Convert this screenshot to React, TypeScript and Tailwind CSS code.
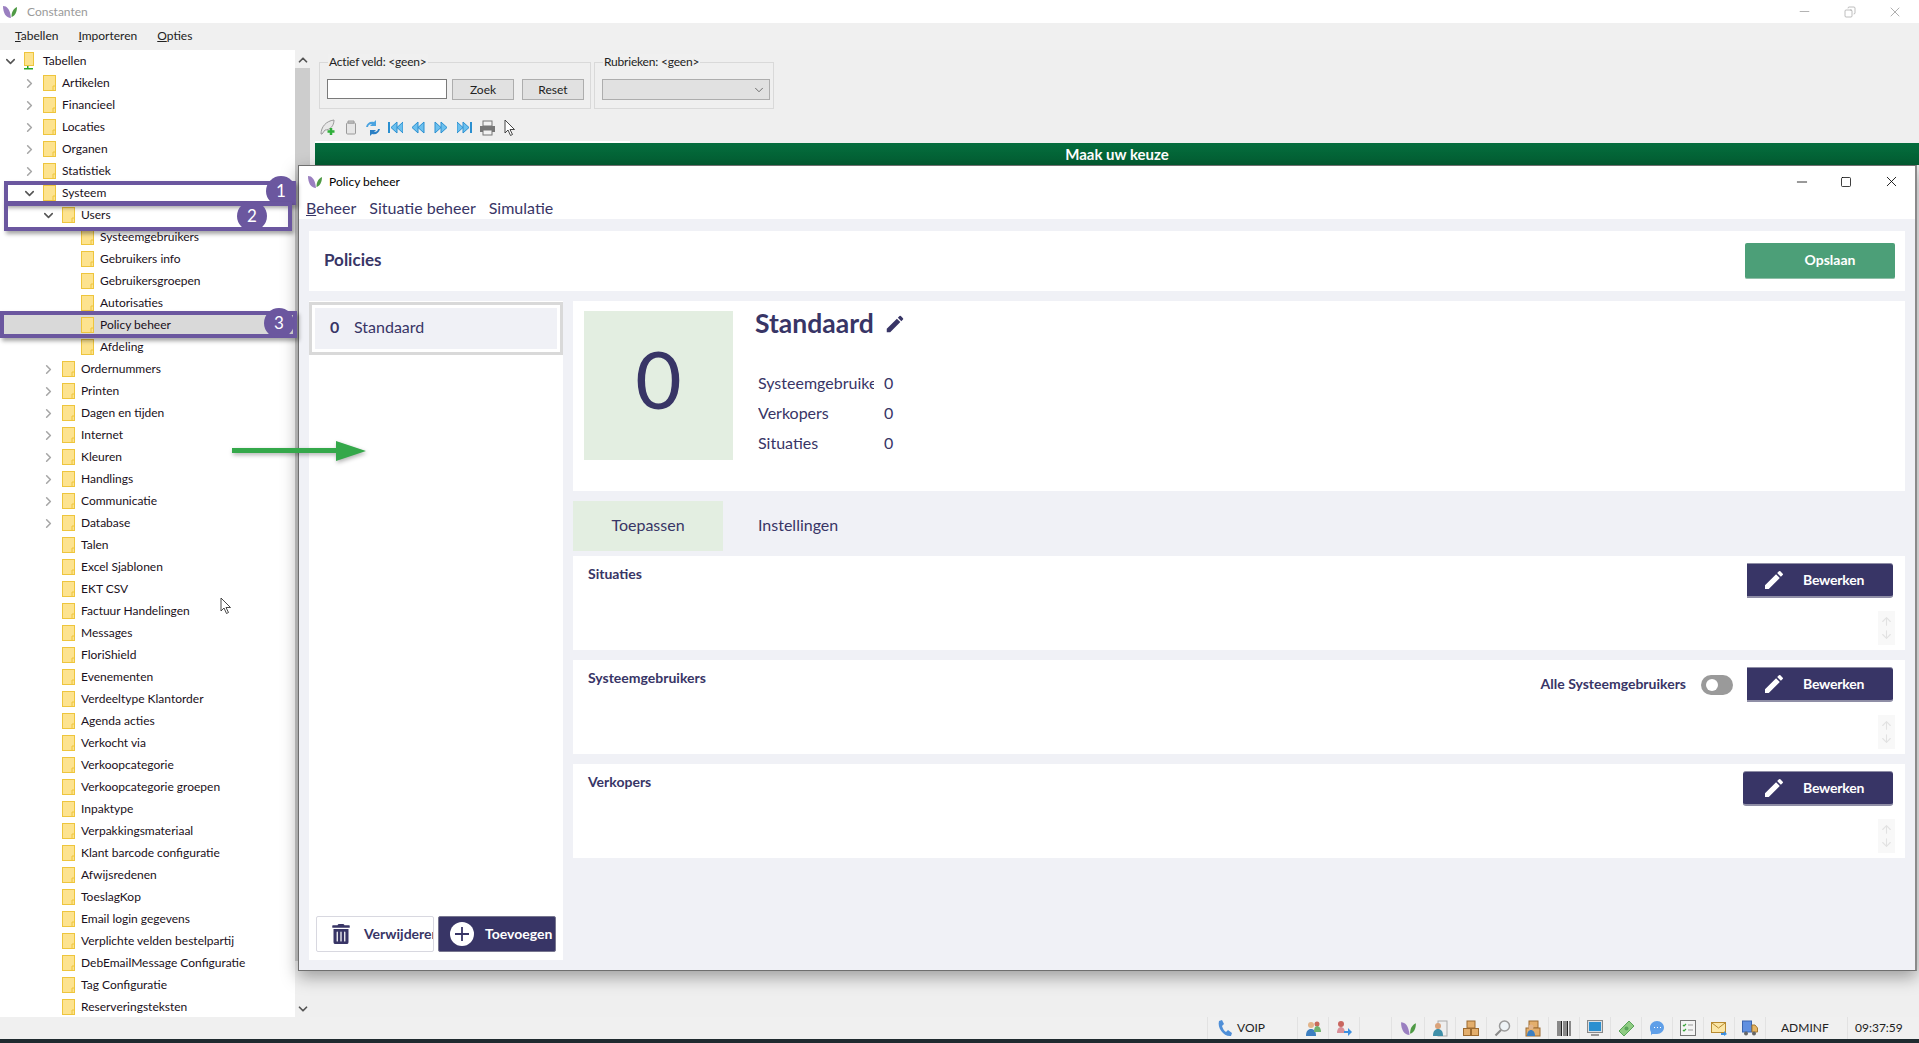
import React from 'react';
import { ChevronDown, ChevronRight, ChevronUp, ArrowUp, ArrowDown, Minus, Square, X, Copy } from 'lucide-react';
import { MdEdit } from 'react-icons/md';
import { FaTrashAlt } from 'react-icons/fa';

const FONT = "font-['Lato','Noto_Sans',sans-serif]";

type TreeItem = { label: string; depth: number; state?: 'open' | 'closed'; selected?: boolean };

const closed = (label: string, depth: number): TreeItem => ({ label, depth, state: 'closed' });
const leaf = (label: string, depth: number): TreeItem => ({ label, depth });

const TREE: TreeItem[] = [
  { label: 'Tabellen', depth: 0, state: 'open' },
  closed('Artikelen', 1),
  closed('Financieel', 1),
  closed('Locaties', 1),
  closed('Organen', 1),
  closed('Statistiek', 1),
  { label: 'Systeem', depth: 1, state: 'open' },
  { label: 'Users', depth: 2, state: 'open' },
  leaf('Systeemgebruikers', 3),
  leaf('Gebruikers info', 3),
  leaf('Gebruikersgroepen', 3),
  leaf('Autorisaties', 3),
  { label: 'Policy beheer', depth: 3, selected: true },
  leaf('Afdeling', 3),
  closed('Ordernummers', 2),
  closed('Printen', 2),
  closed('Dagen en tijden', 2),
  closed('Internet', 2),
  closed('Kleuren', 2),
  closed('Handlings', 2),
  closed('Communicatie', 2),
  closed('Database', 2),
  leaf('Talen', 2),
  leaf('Excel Sjablonen', 2),
  leaf('EKT CSV', 2),
  leaf('Factuur Handelingen', 2),
  leaf('Messages', 2),
  leaf('FloriShield', 2),
  leaf('Evenementen', 2),
  leaf('Verdeeltype Klantorder', 2),
  leaf('Agenda acties', 2),
  leaf('Verkocht via', 2),
  leaf('Verkoopcategorie', 2),
  leaf('Verkoopcategorie groepen', 2),
  leaf('Inpaktype', 2),
  leaf('Verpakkingsmateriaal', 2),
  leaf('Klant barcode configuratie', 2),
  leaf('Afwijsredenen', 2),
  leaf('ToeslagKop', 2),
  leaf('Email login gegevens', 2),
  leaf('Verplichte velden bestelpartij', 2),
  leaf('DebEmailMessage Configuratie', 2),
  leaf('Tag Configuratie', 2),
  leaf('Reserveringsteksten', 2),
];

const INDENT = ['pl-0', 'pl-[19px]', 'pl-[38px]', 'pl-[57px]'];

function Leaf({ size = 16 }: { size?: number }) {
  return (
    <svg width={size} height={size} viewBox="0 0 16 16">
      <path d="M1 2C5 2 8 5 9 14 4 14 1 9 1 2Z" fill="#9a7fc0" />
      <path d="M15 3C15 8 13 12 9.500 13 9.500 8 11 5 15 3Z" fill="#4f9a45" />
    </svg>
  );
}

function Folder() {
  return (
    <svg width="13" height="16" viewBox="0 0 13 16" className="shrink-0">
      <rect x="0.500" y="0.500" width="12" height="15" fill="#fde38f" stroke="#eec53d" />
      <path d="M10 15.500V11h2.500" fill="none" stroke="#eec53d" />
    </svg>
  );
}

function RootFolder() {
  return (
    <svg width="13" height="18" viewBox="0 0 13 18" className="shrink-0">
      <rect x="0.500" y="0.500" width="9" height="13" fill="#fde38f" stroke="#eec53d" />
      <rect x="3" y="14" width="1.500" height="3" fill="#2aa52a" />
      <rect x="0" y="16" width="9" height="1.500" fill="#2aa52a" />
    </svg>
  );
}

function TreeRow({ item }: { item: TreeItem }) {
  return (
    <div className={`h-[22px] flex items-center ${INDENT[item.depth]} ${item.selected ? 'bg-[#d9d9d9]' : ''}`}>
      <span className="w-[24px] shrink-0 flex justify-center pr-[4px]">
        {item.state === 'open' && <ChevronDown size={15} strokeWidth={2.5} className="text-[#555]" />}
        {item.state === 'closed' && <ChevronRight size={15} strokeWidth={2.5} className="text-[#a6a6a6]" />}
      </span>
      {item.depth === 0 ? <RootFolder /> : <Folder />}
      <span className="ml-[6px] text-[12px] text-[#1a1020] whitespace-nowrap">{item.label}</span>
    </div>
  );
}

function Underlined({ first, rest }: { first: string; rest: string }) {
  return (
    <span>
      <span className="underline">{first}</span>
      {rest}
    </span>
  );
}

function GroupBox({ legend, className, children }: { legend: string; className: string; children: React.ReactNode }) {
  return (
    <div className={`relative h-[47px] border border-[#d9d9d9] ${className}`}>
      <span className="absolute left-[8px] -top-[9px] bg-[#f0f0f0] px-px text-[12px] tracking-[-0.2px] leading-[16px] text-[#222]">{legend}</span>
      {children}
    </div>
  );
}

function SkipIcon({ dir, bar }: { dir: 'l' | 'r'; bar?: boolean }) {
  const d = dir === 'l' ? 'M7 1 1 6.500 7 12ZM13 1 7 6.500 13 12Z' : 'M1 1 7 6.500 1 12ZM7 1 13 6.500 7 12Z';
  return (
    <svg width="15" height="13" viewBox="0 0 15 13">
      <path d={d} fill="#6cc0ee" stroke="#2a8fd0" strokeWidth="1" transform={bar ? (dir === 'l' ? 'translate(2 0)' : 'translate(-1 0)') : undefined} />
      {bar && <rect x={dir === 'l' ? 0 : 13} y="1" width="2" height="11" fill="#2a8fd0" />}
    </svg>
  );
}

function Toolbar() {
  return (
    <div className="h-[32px] flex items-center pl-[9px] pt-[5px]">
      <svg width="17" height="17" viewBox="0 0 17 17">
        <path d="M2 15C2 8 7 2 15 1 15 7 11 11 6 11L3 15Z" fill="#e8e8e8" stroke="#9a9a9a" />
        <path d="M12 9v7M8.500 12.500h7" stroke="#2faf3a" strokeWidth="2.500" />
      </svg>
      <svg width="12" height="15" viewBox="0 0 12 15" className="ml-[9px]">
        <rect x="1.500" y="3" width="9" height="11" rx="1" fill="#e6e6e6" stroke="#9a9a9a" />
        <path d="M3 1h6v2H3Z" fill="#cfcfcf" stroke="#9a9a9a" />
      </svg>
      <svg width="16" height="16" viewBox="0 0 16 16" className="ml-[8px]">
        <path d="M1 7C2 3 5 1 9 2L11 0V6H5L7 4C5 4 3 5 3 7Z" fill="#4aa3e0" />
        <path d="M15 9C14 13 11 15 7 14L5 16V10H11L9 12C11 12 13 11 13 9Z" fill="#2a7fc4" />
      </svg>
      <span className="ml-[7px] flex"><SkipIcon dir="l" bar /></span>
      <span className="ml-[8px] flex"><SkipIcon dir="l" /></span>
      <span className="ml-[8px] flex"><SkipIcon dir="r" /></span>
      <span className="ml-[8px] flex"><SkipIcon dir="r" bar /></span>
      <svg width="17" height="16" viewBox="0 0 17 16" className="ml-[7px]">
        <rect x="4" y="1" width="9" height="5" fill="#f2f2f2" stroke="#777" />
        <rect x="1" y="6" width="15" height="6" fill="#777" />
        <rect x="4" y="10" width="9" height="5" fill="#f2f2f2" stroke="#777" />
      </svg>
      <Cursor className="ml-[8px]" />
    </div>
  );
}

function Cursor({ className }: { className?: string }) {
  return (
    <svg width="12" height="18" viewBox="0 0 12 18" className={className}>
      <path d="M1 1V14L4 11 6.500 16.500 8.500 15.500 6 10.500H10.500Z" fill="#fff" stroke="#333" strokeWidth="0.9" />
    </svg>
  );
}

function BewerkenButton({ wide }: { wide?: boolean }) {
  return (
    <button className={`h-[35px] flex items-center bg-[#383566] border-b-2 border-t border-[#8f8ea6] text-white ${wide ? 'w-[150px] rounded-[3px] pl-[19px]' : 'w-[146px] rounded-r-[3px] pl-[15px]'}`}>
      <MdEdit size={24} className="shrink-0" />
      <span className="ml-[17px] text-[14px] tracking-[-0.2px] font-bold pb-[2px]">Bewerken</span>
    </button>
  );
}

function Section({ title, children, wide }: { title: string; children?: React.ReactNode; wide?: boolean }) {
  return (
    <div className="h-[94px] bg-white flex justify-between">
      <div className="pl-[15px] pt-[7px] text-[14px] font-bold text-[#383566]">{title}</div>
      <div className="flex flex-col items-end pr-[12px] pt-[7px]">
        <div className="flex items-center">
          {children}
          <BewerkenButton wide={wide} />
        </div>
        <div className="mt-[13px] -mr-[2px] w-[17px] h-[34px] bg-[#f8f8f8] flex flex-col items-center justify-center text-[#e2e2e2]">
          <ArrowUp size={13} strokeWidth={2} />
          <ArrowDown size={13} strokeWidth={2} />
        </div>
      </div>
    </div>
  );
}

function Stat({ label }: { label: string }) {
  return (
    <div className="h-[30px] flex items-center text-[16px] text-[#383566]">
      <span className="w-[116px] mr-[10px] overflow-hidden whitespace-nowrap">{label}</span>
      <span>0</span>
    </div>
  );
}

function PolicyDialog() {
  return (
    <div className="absolute left-[298px] top-[165px] w-[1619px] h-[806px] flex flex-col bg-[#f0f1f6] border border-[#6f6f6f] border-r-2 border-r-[#8a8a8a] shadow-[0_6px_16px_rgba(0,0,0,0.35)]">
      <div className="bg-white h-[53px] shrink-0">
        <div className="h-[29px] flex items-center pl-[8px] pt-[2px]">
          <Leaf size={16} />
          <span className="ml-[6px] text-[12px] text-black">Policy beheer</span>
          <div className="ml-auto flex items-center text-black">
            <Minus size={16} strokeWidth={1.2} className="mr-[30px]" />
            <Square size={12} strokeWidth={1.5} className="mr-[31px]" />
            <X size={17} strokeWidth={1.2} className="mr-[15px]" />
          </div>
        </div>
        <div className="h-[24px] flex items-center pl-[7px] pt-[2px] gap-[13px] text-[16px] text-[#383566]">
          <Underlined first="B" rest="eheer" />
          <span>Situatie beheer</span>
          <span>Simulatie</span>
        </div>
      </div>

      <div className="flex-1 min-h-0 flex flex-col pt-[12px] pl-[10px] pr-[10px] pb-[10px]">
        <div className="h-[60px] shrink-0 bg-white flex items-center justify-between pl-[15px] pr-[10px]">
          <span className="text-[17px] font-bold text-[#383566] -mt-[3px]">Policies</span>
          <button className="w-[150px] h-[36px] rounded-[2px] bg-[#4c9f78] border-b border-[#8fbfa8] text-white text-[14px] font-bold pl-[20px] pb-[2px]">Opslaan</button>
        </div>

        <div className="mt-[10px] flex-1 min-h-0 flex gap-[10px]">
          <div className="w-[254px] bg-white flex flex-col justify-between pb-[8px]">
            <div className="mt-px h-[53px] border-[3px] border-[#d9d9d9] p-[3px] bg-white">
              <div className="h-full bg-[#f0f1f6] flex items-center pl-[15px] pb-[3px] text-[#383566] text-[16px]">
                <span className="font-bold w-[24px]">0</span>
                <span>Standaard</span>
              </div>
            </div>
            <div className="flex gap-[4px] px-[7px]">
              <button className="w-[118px] h-[36px] rounded-[2px] bg-white border border-[#d8d8e0] flex items-center pl-[14px] text-[#383566] overflow-hidden">
                <FaTrashAlt size={20} className="shrink-0" />
                <span className="ml-[13px] pb-[2px] text-[14px] font-bold whitespace-nowrap">Verwijderen</span>
              </button>
              <button className="w-[118px] h-[36px] rounded-[2px] bg-[#383566] border border-[#77768f] flex items-center pl-[11px] text-white">
                <span className="w-[24px] h-[24px] rounded-full bg-white flex items-center justify-center shrink-0">
                  <svg width="16" height="16" viewBox="0 0 16 16"><path d="M8 1v14M1 8h14" stroke="#383566" strokeWidth="1.800" /></svg>
                </span>
                <span className="ml-[11px] pb-[2px] text-[14px] font-bold">Toevoegen</span>
              </button>
            </div>
          </div>

          <div className="flex-1 flex flex-col">
            <div className="h-[190px] bg-white pl-[11px] pt-[10px] flex">
              <div className="w-[149px] h-[149px] bg-[#e3eee1] flex items-center justify-center pb-[16px] text-[80px] leading-none text-[#383566]">0</div>
              <div className="ml-[22px]">
                <div className="flex items-center h-[26px]">
                  <span className="text-[26.5px] font-bold text-[#383566]">Standaard</span>
                  <MdEdit size={22} className="ml-[10px] text-[#383566]" />
                </div>
                <div className="mt-[31px] ml-[3px]">
                  <Stat label="Systeemgebruikers" />
                  <Stat label="Verkopers" />
                  <Stat label="Situaties" />
                </div>
              </div>
            </div>

            <div className="mt-[10px] h-[50px] flex text-[16px] text-[#383566]">
              <div className="w-[150px] bg-[#e3eee1] flex items-center justify-center pb-[2px]">Toepassen</div>
              <div className="ml-[35px] flex items-center pb-[2px]">Instellingen</div>
            </div>

            <div className="mt-[5px] flex flex-col gap-[10px]">
              <Section title="Situaties" />
              <Section title="Systeemgebruikers">
                <span className="text-[14px] font-bold text-[#383566] whitespace-nowrap pb-[2px]">Alle Systeemgebruikers</span>
                <span className="ml-[15px] mr-[14px] w-[32px] h-[20px] rounded-full bg-[#9a9a9a] flex items-center pl-[5px]">
                  <span className="w-[12px] h-[12px] rounded-full bg-white" />
                </span>
              </Section>
              <Section title="Verkopers" wide />
            </div>
          </div>
        </div>
      </div>
    </div>
  );
}

function Highlight({ className, n, badge }: { className: string; n: number; badge: string }) {
  return (
    <>
      <div className={`absolute border-[4px] border-[#6b579f] shadow-[2px_3px_4px_rgba(0,0,0,0.35)] ${className}`} />
      <div className={`absolute w-[30px] h-[30px] rounded-full bg-[#6b579f] text-white text-[17px] flex items-center justify-center ${badge}`}>{n}</div>
    </>
  );
}

function StatusIcon({ kind }: { kind: string }) {
  switch (kind) {
    case 'leaf':
      return <Leaf size={17} />;
    case 'people':
      return (
        <svg width="17" height="17" viewBox="0 0 17 17">
          <circle cx="6" cy="5" r="3" fill="#e2b48a" /><path d="M1 16c0-5 2-7 5-7s5 2 5 7Z" fill="#3d7fc0" />
          <circle cx="12" cy="4" r="2.500" fill="#c76a5a" /><path d="M9 12c0-4 1-6 3-6s4 2 4 6Z" fill="#6fb16f" />
        </svg>
      );
    case 'person-arrow':
      return (
        <svg width="17" height="17" viewBox="0 0 17 17">
          <circle cx="5" cy="4" r="3" fill="#c9665f" /><path d="M1 13c0-4 2-6 4-6s4 2 4 6Z" fill="#d9909a" />
          <path d="M8 11h4V8l4 4-4 4v-3H8Z" fill="#3d8fe0" />
        </svg>
      );
    case 'doc':
      return (
        <svg width="16" height="17" viewBox="0 0 16 17">
          <rect x="6" y="1" width="9" height="15" fill="#eee" stroke="#aaa" />
          <circle cx="6" cy="6" r="3" fill="#d9a27a" /><path d="M1 16c0-5 2-7 5-7s5 2 5 7Z" fill="#3f8fa8" />
        </svg>
      );
    case 'boxes':
      return (
        <svg width="16" height="17" viewBox="0 0 16 17">
          <rect x="4" y="1" width="8" height="7" fill="#e3ae6c" stroke="#9c6a30" />
          <rect x="0.500" y="8.500" width="7" height="7" fill="#e3ae6c" stroke="#9c6a30" />
          <rect x="8.500" y="8.500" width="7" height="7" fill="#e3ae6c" stroke="#9c6a30" />
        </svg>
      );
    case 'search':
      return (
        <svg width="17" height="17" viewBox="0 0 17 17">
          <circle cx="10.500" cy="6" r="5" fill="#eef3f6" stroke="#9a9a9a" strokeWidth="1.500" />
          <path d="M7 10 1.500 15.500" stroke="#8a8a8a" strokeWidth="2.200" />
        </svg>
      );
    case 'boxperson':
      return (
        <svg width="16" height="17" viewBox="0 0 16 17">
          <rect x="4" y="1" width="9" height="7" fill="#e3ae6c" stroke="#9c6a30" />
          <rect x="1" y="8" width="14" height="8" fill="#e3ae6c" stroke="#9c6a30" />
          <circle cx="6" cy="7" r="2.500" fill="#e2b48a" /><path d="M2 16c0-4 2-6 4-6s4 2 4 6Z" fill="#3d7fc0" />
        </svg>
      );
    case 'barcode':
      return (
        <svg width="14" height="15" viewBox="0 0 14 15">
          <path d="M1 0v15M3 0v15M4.500 0v15M7 0v15M9 0v15M10.500 0v15M13 0v15" stroke="#222" strokeWidth="1" />
        </svg>
      );
    case 'monitor':
      return (
        <svg width="16" height="17" viewBox="0 0 16 17">
          <rect x="0.500" y="0.500" width="15" height="12" fill="#d8dde2" stroke="#888" />
          <rect x="2" y="2" width="12" height="9" fill="#2a8fd0" />
          <path d="M4 15h8" stroke="#999" strokeWidth="2" />
        </svg>
      );
    case 'money':
      return (
        <svg width="17" height="17" viewBox="0 0 17 17">
          <path d="M1 11 11 1l5 5L6 16Z" fill="#8ecb82" stroke="#5aa45a" />
          <circle cx="8.500" cy="8.500" r="2" fill="#5aa45a" />
        </svg>
      );
    case 'chat':
      return (
        <svg width="16" height="16" viewBox="0 0 16 16">
          <path d="M8 1c4 0 7 3 7 6.500S12 14 8 14H3l-1 1.500V12C1 10.500 1 9 1 7.500 1 4 4 1 8 1Z" fill="#5f9fe8" />
          <path d="M5 7.500h1M8 7.500h1M11 7.500h1" stroke="#fff" />
        </svg>
      );
    case 'check':
      return (
        <svg width="16" height="16" viewBox="0 0 16 16">
          <rect x="0.500" y="0.500" width="15" height="15" fill="#f4f4f4" stroke="#777" />
          <path d="M3 5l1 1 2-2M3 10l1 1 2-2" fill="none" stroke="#3aa53a" strokeWidth="1.200" />
          <path d="M8 5h5M8 10h5" stroke="#999" />
        </svg>
      );
    case 'mail':
      return (
        <svg width="17" height="15" viewBox="0 0 17 15">
          <rect x="0.500" y="1.500" width="14" height="10" fill="#fbe6a6" stroke="#b78a30" />
          <path d="M1 2l6.500 5L14 2" fill="none" stroke="#b78a30" />
          <path d="M10 12h3v-2l3 3-3 2v-1h-3Z" fill="#3d8fe0" />
        </svg>
      );
    default:
      return (
        <svg width="16" height="16" viewBox="0 0 16 16">
          <rect x="0.500" y="1" width="9" height="11" fill="#5f8fe0" stroke="#3a65b0" />
          <path d="M10 5h3l2.500 3v4H10Z" fill="#e5b565" stroke="#a57a30" />
          <circle cx="4" cy="13.500" r="2" fill="#666" /><circle cx="12" cy="13.500" r="2" fill="#666" />
        </svg>
      );
  }
}

const STATUS_CELLS: { kind?: string; w: string }[] = [
  { kind: 'people', w: 'w-[31px]' },
  { kind: 'person-arrow', w: 'w-[31px]' },
  { w: 'w-[32px]' },
  { kind: 'leaf', w: 'w-[33px]' },
  { kind: 'doc', w: 'w-[31px]' },
  { kind: 'boxes', w: 'w-[31px]' },
  { kind: 'search', w: 'w-[31px]' },
  { kind: 'boxperson', w: 'w-[31px]' },
  { kind: 'barcode', w: 'w-[31px]' },
  { kind: 'monitor', w: 'w-[31px]' },
  { kind: 'money', w: 'w-[31px]' },
  { kind: 'chat', w: 'w-[31px]' },
  { kind: 'check', w: 'w-[31px]' },
  { kind: 'mail', w: 'w-[31px]' },
  { kind: 'truck', w: 'w-[31px]' },
];

function StatusBar() {
  return (
    <div className="h-[22px] shrink-0 flex items-center bg-[#f0f0f0] text-[12px] text-[#222] pl-[1207px]">
      <div className="w-[90px] h-full flex items-center border-l border-[#e2e2e2] pl-[9px]">
        <svg width="16" height="18" viewBox="0 0 16 18">
          <path d="M2 2 5 1l2 4-2 2c1 3 2 5 4 6l2-2 4 3-1 3C7 18 0 9 2 2Z" fill="#4f8fd8" />
        </svg>
        <span className="ml-[4px]">VOIP</span>
      </div>
      {STATUS_CELLS.map((cell, i) => (
        <div key={i} className={`${cell.w} h-full flex items-center justify-center border-l border-[#e2e2e2]`}>
          {cell.kind && <StatusIcon kind={cell.kind} />}
        </div>
      ))}
      <div className="w-[82px] h-full flex items-center border-l border-[#e2e2e2] pl-[15px]">ADMINF</div>
      <div className="h-full flex items-center border-l border-[#e2e2e2] pl-[7px]">09:37:59</div>
    </div>
  );
}

export default function App() {
  return (
    <div className={`relative w-[1919px] h-[1043px] overflow-hidden flex flex-col bg-[#efefef] ${FONT}`}>
      {/* main window chrome */}
      <div className="h-[23px] shrink-0 bg-white flex items-center pl-[2px]">
        <Leaf size={16} />
        <span className="ml-[9px] text-[12px] text-[#9a9a9a]">Constanten</span>
        <div className="ml-auto flex items-center text-[#9a9a9a]">
          <Minus size={15} strokeWidth={1.2} className="mr-[32px]" />
          <Copy size={12} strokeWidth={1.3} className="mr-[31px] -scale-x-100" />
          <X size={16} strokeWidth={1.2} className="mr-[16px]" />
        </div>
      </div>
      <div className="h-[27px] shrink-0 bg-[#f0f0f0] flex items-center pl-[15px] gap-[20px] text-[12px] text-[#222] pb-[2px]">
        <Underlined first="T" rest="abellen" />
        <Underlined first="I" rest="mporteren" />
        <Underlined first="O" rest="pties" />
      </div>

      <div className="flex-1 min-h-0 flex">
        {/* tree */}
        <div className="w-[295px] shrink-0 bg-white overflow-hidden">
          {TREE.map((item) => (
            <TreeRow key={item.label} item={item} />
          ))}
        </div>
        <div className="w-[15px] shrink-0 flex flex-col items-center bg-[#f0f0f0]">
          <ChevronUp size={14} strokeWidth={3} className="text-[#555] mt-[3px] shrink-0" />
          <div className="mt-[1px] w-full h-[893px] bg-[#cdcdcd] shrink-0" />
          <ChevronDown size={14} strokeWidth={3} className="text-[#555] mt-auto mb-[1px] shrink-0" />
        </div>

        {/* right-hand form */}
        <div className="flex-1 min-w-0 flex flex-col">
          <div className="h-[59px] shrink-0 flex pt-[12px] pl-[9px] gap-[3px]">
            <GroupBox legend="Actief veld: <geen>" className="w-[272px] flex items-start pl-[7px] pt-[16px]">
              <input className="w-[120px] h-[20px] bg-white border border-[#7a7a7a]" readOnly />
              <button className="ml-[5px] w-[62px] h-[21px] bg-[#e1e1e1] border border-[#adadad] text-[12px] text-[#222]">Zoek</button>
              <button className="ml-[8px] w-[62px] h-[21px] bg-[#e1e1e1] border border-[#adadad] text-[12px] text-[#222]">Reset</button>
            </GroupBox>
            <GroupBox legend="Rubrieken: <geen>" className="w-[180px] flex items-start pl-[7px] pt-[16px]">
              <div className="w-[168px] h-[21px] bg-[#e1e1e1] border border-[#adadad] flex items-center justify-end pr-[3px]">
                <ChevronDown size={14} strokeWidth={1.4} className="text-[#555]" />
              </div>
            </GroupBox>
          </div>
          <Toolbar />
          <div className="ml-[5px] h-[2px] w-[315px] bg-white shrink-0" />
          <div className="ml-[5px] h-[22px] shrink-0 bg-gradient-to-b from-[#046d3d] to-[#035e33] flex items-center justify-center text-white text-[15px] font-bold">
            Maak uw keuze
          </div>
        </div>
      </div>

      <StatusBar />
      <div className="h-[4px] shrink-0 bg-[#1f2a2f]" />

      <PolicyDialog />

      {/* annotations drawn on top of the screenshot */}
      <Highlight className="left-[4px] top-[181px] w-[292px] h-[24px]" n={1} badge="left-[266px] top-[176px]" />
      <Highlight className="left-[4px] top-[202px] w-[288px] h-[29px]" n={2} badge="left-[237px] top-[201px]" />
      <Highlight className="left-0 top-[311px] w-[297px] h-[27px]" n={3} badge="left-[264px] top-[308px]" />

      <svg width="140" height="24" viewBox="0 0 140 24" className="absolute left-[232px] top-[440px] drop-shadow-[1px_2px_2px_rgba(0,0,0,0.3)]">
        <path d="M0 8h104V1l30 10-30 10v-8H0Z" fill="#34a84a" />
      </svg>
      <Cursor className="absolute left-[220px] top-[597px]" />
    </div>
  );
}
